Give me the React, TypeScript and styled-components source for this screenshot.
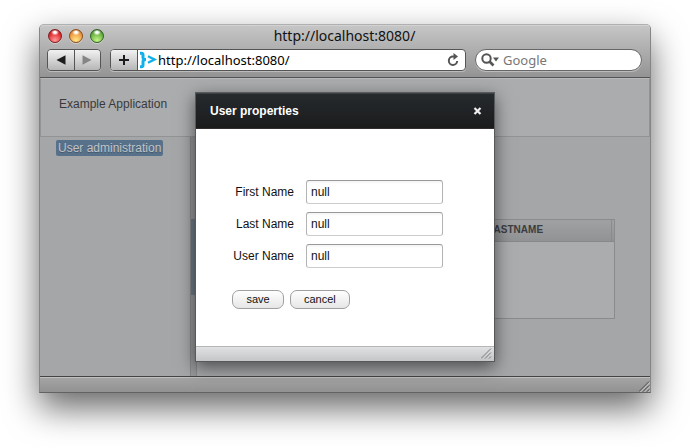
import React from 'react';
import styled, { createGlobalStyle } from 'styled-components';

const GlobalStyle = createGlobalStyle`
  *, *::before, *::after { box-sizing: border-box; }
  body {
    margin: 0;
    background: #fff;
    color: #222;
    font: 12px/16px "Liberation Sans", Arial, sans-serif;
    overflow: hidden;
  }
  input, button { font: inherit; margin: 0; }
`;

const lucida = '"Noto Sans", "Open Sans", sans-serif';

const Page = styled.div`
  display: flex;
  min-height: 100vh;
  padding: 24px 39px 54px;
`;

const BrowserWindow = styled.div`
  flex: 1;
  display: flex;
  flex-direction: column;
  border: 1px solid #858585;
  border-top-color: #b0b0b0;
  border-bottom-color: #636363;
  border-radius: 5px 5px 0 0;
  background: #a5a6a8;
  box-shadow: 0 15px 34px rgba(0, 0, 0, 0.6);
`;

const Chrome = styled.header`
  display: flex;
  flex-direction: column;
  gap: 3px;
  height: 53px;
  padding: 0 8px 0 7px;
  border-bottom: 1px solid #555;
  border-radius: 4px 4px 0 0;
  background: linear-gradient(#c6c6c6, #949494);
  box-shadow: inset 0 1px #d2d2d2;
  font-family: ${lucida};
`;

const TitleBar = styled.div`
  display: grid;
  grid-template-columns: 1fr auto 1fr;
  align-items: center;
  height: 21px;
`;

const Lights = styled.div`
  display: flex;
  gap: 7px;
  padding-left: 1px;
`;

const Light = styled.button<{ $edge: string; $mid: string; $glow: string }>`
  width: 14px;
  height: 14px;
  padding: 0;
  border: 1px solid ${(p) => p.$edge};
  border-radius: 50%;
  background:
    radial-gradient(ellipse 4px 3px at 50% 20%, #fff 30%, transparent),
    radial-gradient(circle at 50% 85%, ${(p) => p.$glow}, ${(p) => p.$mid} 65%, ${(p) => p.$edge});
  box-shadow: 0 1px rgba(255, 255, 255, 0.35);
`;

const WindowTitle = styled.h1`
  margin: 0;
  color: #111;
  font-size: 14px;
  font-weight: 400;
  line-height: 20px;
`;

const Toolbar = styled.div`
  display: flex;
  gap: 9px;
  height: 22px;
`;

const ButtonPair = styled.div`
  display: flex;
  width: 54px;
  border: 1px solid #555;
  border-radius: 4px;
  overflow: hidden;
  box-shadow: 0 1px rgba(255, 255, 255, 0.35);
`;

const ToolButton = styled.button`
  display: flex;
  flex: 1;
  align-items: center;
  justify-content: center;
  padding: 0;
  border: 0;
  background: linear-gradient(#f2f2f2, #b6b6b6);
  & + & { border-left: 1px solid #555; }
`;

const AddressBar = styled.div`
  display: flex;
  flex: 1;
  align-items: stretch;
  border: 1px solid #555;
  border-radius: 4px;
  overflow: hidden;
  background: #fff;
  box-shadow: 0 1px rgba(255, 255, 255, 0.35);
`;

const AddButton = styled(ToolButton)`
  flex: 0 0 27px;
  border-right: 1px solid #555;
`;

const SiteIcon = styled.svg`
  flex: none;
  align-self: center;
  width: 20px;
  height: 18px;
`;

const BareInput = styled.input`
  flex: 1;
  min-width: 0;
  padding: 0;
  border: 0;
  outline: 0;
  background: transparent;
  color: #000;
  font-size: 13px;
  line-height: 18px;
  &::placeholder { color: #777; opacity: 1; }
`;

const ReloadButton = styled.button`
  display: flex;
  align-items: center;
  padding: 0 5px;
  border: 0;
  background: transparent;
`;

const SearchBox = styled.label`
  display: flex;
  align-items: center;
  gap: 4px;
  width: 167px;
  padding: 0 5px;
  border: 1px solid #666;
  border-radius: 11px;
  background: #fff;
  box-shadow: 0 1px rgba(255, 255, 255, 0.35);
`;

const Viewport = styled.div`
  position: relative;
  flex: 1;
  display: flex;
  flex-direction: column;
`;

const AppHeader = styled.div`
  height: 59px;
  padding: 17px 18px;
  border: 1px solid #929395;
  border-top-color: #b7b8ba;
  background: #abacae;
  color: #3a3a3b;
  line-height: 16px;
`;

const Columns = styled.div`
  flex: 1;
  display: flex;
`;

const Sidebar = styled.nav`
  width: 150px;
  padding: 3px 16px;
`;

const NavLink = styled.a`
  display: inline-block;
  padding: 0 2px;
  border-radius: 2px;
  background: #58718a;
  color: #c0c4c8;
  text-decoration: none;
  text-shadow: 0 1px #45586c;
  line-height: 16px;
  white-space: nowrap;
`;

const Splitter = styled.div`
  width: 7px;
  padding-top: 82px;
  border: solid #87888a;
  border-width: 0 1px;
  background: #96979a;
`;

const SplitterGrip = styled.div`
  height: 76px;
  background: #6f7b87;
`;

const Main = styled.main`
  flex: 1;
  padding: 82px 35px 0;
`;

const TableFrame = styled.div`
  min-height: 100px;
  border: 1px solid #8a8b8d;
  background: #abacae;
`;

const Table = styled.table`
  width: 100%;
  border-collapse: collapse;
  table-layout: fixed;
`;

const HeadCell = styled.th<{ $width?: number }>`
  width: ${(p) => (p.$width ? `${p.$width}px` : 'auto')};
  height: 21px;
  padding: 0 6px;
  border-right: 1px solid #8a8b8d;
  border-bottom: 1px solid #87888a;
  background: linear-gradient(#a0a1a3, #919294);
  color: #3c3d40;
  font-size: 10px;
  line-height: 14px;
  text-align: left;
  &:last-child { border-right: 0; padding: 0; }
`;

const StatusBar = styled.footer`
  display: flex;
  align-items: flex-end;
  justify-content: flex-end;
  height: 16px;
  border-top: 1px solid #444;
  background: linear-gradient(#a5a5a5, #929292);
  box-shadow: inset 0 1px #c0c0c0;
`;

const Overlay = styled.div`
  position: absolute;
  inset: 0;
  display: flex;
  align-items: flex-start;
  justify-content: center;
  padding-top: 14px;
`;

const Dialog = styled.section`
  display: flex;
  flex-direction: column;
  width: 300px;
  border: 1px solid #58595a;
  background: #fff;
  box-shadow: 0 5px 16px rgba(0, 0, 0, 0.55);
`;

const DialogHeader = styled.header`
  display: flex;
  align-items: center;
  justify-content: space-between;
  height: 36px;
  padding: 0 12px 0 14px;
  border-bottom: 1px solid #332c2d;
  background: linear-gradient(#262b2e, #1b1b1c);
  box-shadow: inset 0 1px #3d4143;
`;

const DialogTitle = styled.h2`
  margin: 0;
  color: #fff;
  font-size: 12px;
  line-height: 16px;
`;

const CloseButton = styled.button`
  display: flex;
  padding: 0;
  border: 0;
  background: transparent;
`;

const Form = styled.form`
  display: flex;
  flex-direction: column;
  gap: 8px;
  padding: 51px 51px 37px 36px;
`;

const Field = styled.div`
  display: grid;
  grid-template-columns: 62px 1fr;
  align-items: center;
  gap: 12px;
  color: #111;
  text-align: right;
  white-space: nowrap;
`;

const TextInput = styled.input`
  width: 100%;
  height: 24px;
  padding: 0 4px;
  border: 1px solid #b3b3b3;
  border-top-color: #999;
  border-bottom-color: #ccc;
  border-radius: 3px;
  background: linear-gradient(#f3f3f3, #fff 3px);
  color: #111;
  line-height: 16px;
`;

const Actions = styled.div`
  display: flex;
  gap: 6px;
  padding-top: 14px;
`;

const PushButton = styled.button`
  height: 19px;
  padding: 0 13px 1px;
  min-width: 52px;
  border: 1px solid #a0a0a0;
  border-radius: 7px;
  background: linear-gradient(#fff, #e6e6e6);
  color: #111;
  font-size: 11px;
  line-height: 16px;
`;

const DialogFooter = styled.footer`
  display: flex;
  align-items: flex-end;
  justify-content: flex-end;
  height: 15px;
  padding: 0 2px 2px 0;
  border-top: 1px solid #b5b6b7;
  background: linear-gradient(#e0e1e2, #c5c6c8);
`;

const fields = [
  { id: 'first', label: 'First Name' },
  { id: 'last', label: 'Last Name' },
  { id: 'user', label: 'User Name' },
];

function ResizeGrip({ light }: { light?: boolean }) {
  return (
    <svg width="11" height="11" viewBox="0 0 11 11" fill="none" aria-hidden="true">
      {light && <path d="M1 11.5 11.5 1M5 11.5 11.5 5M9 11.5 11.5 9" stroke="#d0d0d0" />}
      <path d="M0 10.5 10 .5M4 10.5 10 4.5M8 10.5 10 8.5" stroke={light ? '#4c4c4c' : '#77787a'} />
    </svg>
  );
}

export default function App() {
  return (
    <Page>
      <GlobalStyle />
      <BrowserWindow>
        <Chrome>
          <TitleBar>
            <Lights>
              <Light aria-label="Close window" $edge="#7d1d20" $mid="#e0262c" $glow="#ff9a98" />
              <Light aria-label="Minimize window" $edge="#8c4f1c" $mid="#f0953a" $glow="#ffe88a" />
              <Light aria-label="Zoom window" $edge="#2f6420" $mid="#62ad3c" $glow="#c6f58a" />
            </Lights>
            <WindowTitle>http://localhost:8080/</WindowTitle>
          </TitleBar>
          <Toolbar>
            <ButtonPair>
              <ToolButton aria-label="Back">
                <svg width="10" height="10" viewBox="0 0 10 10"><path d="M.5 5 9.500 .2v9.600z" fill="#1c1c1c" /></svg>
              </ToolButton>
              <ToolButton aria-label="Forward">
                <svg width="10" height="10" viewBox="0 0 10 10"><path d="M9.500 5 .5 .2v9.600z" fill="#858585" /></svg>
              </ToolButton>
            </ButtonPair>
            <AddressBar>
              <AddButton aria-label="Add bookmark">
                <svg width="12" height="12" viewBox="0 0 12 12"><path d="M6 1v10M1 6h10" stroke="#1c1c1c" strokeWidth="2" /></svg>
              </AddButton>
              <SiteIcon viewBox="0 0 20 18" fill="none" stroke="#12b0ea" aria-hidden="true">
                <path d="M2 2.200h1.300q1.700 0 1.700 1.800v2.500Q5 8.500 8 8.500Q5 8.500 5 10.500v3.500q0 1.800-1.700 1.800H2" strokeWidth="3" />
                <path d="m10 5.200 6.500 3.300L10 11.800" strokeWidth="2.400" />
              </SiteIcon>
              <BareInput aria-label="Address" defaultValue="http://localhost:8080/" />
              <ReloadButton aria-label="Reload">
                <svg width="14" height="14" viewBox="0 0 14 14" fill="none">
                  <path d="M8.500 3.500H7A4.200 4.200 0 1 0 11.200 8" stroke="#555" strokeWidth="2" />
                  <path d="M7.500 0v7L12 3.500z" fill="#555" />
                </svg>
              </ReloadButton>
            </AddressBar>
            <SearchBox>
              <svg width="18" height="14" viewBox="0 0 18 14" fill="none" aria-hidden="true">
                <circle cx="5.500" cy="5.500" r="4.200" stroke="#555" strokeWidth="2" />
                <path d="m8.500 8.500 4 4" stroke="#555" strokeWidth="2.600" />
                <path d="M12 4.500h6L15 8.500z" fill="#555" />
              </svg>
              <BareInput aria-label="Search" placeholder="Google" />
            </SearchBox>
          </Toolbar>
        </Chrome>
        <Viewport>
          <AppHeader>Example Application</AppHeader>
          <Columns>
            <Sidebar>
              <NavLink href="#users">User administration</NavLink>
            </Sidebar>
            <Splitter>
              <SplitterGrip />
            </Splitter>
            <Main>
              <TableFrame>
                <Table>
                  <thead>
                    <tr>
                      <HeadCell />
                      <HeadCell scope="col" $width={130}>LASTNAME</HeadCell>
                      <HeadCell $width={3} />
                    </tr>
                  </thead>
                </Table>
              </TableFrame>
            </Main>
          </Columns>
          <Overlay>
            <Dialog role="dialog" aria-labelledby="dialog-title">
              <DialogHeader>
                <DialogTitle id="dialog-title">User properties</DialogTitle>
                <CloseButton aria-label="Close">
                  <svg width="9" height="8" viewBox="0 0 9 8"><path d="m1.500 1 6 6M7.500 1l-6 6" stroke="#eee" strokeWidth="2.200" /></svg>
                </CloseButton>
              </DialogHeader>
              <Form onSubmit={(e) => e.preventDefault()}>
                {fields.map((f) => (
                  <Field key={f.id}>
                    <label htmlFor={f.id}>{f.label}</label>
                    <TextInput id={f.id} defaultValue="null" />
                  </Field>
                ))}
                <Actions>
                  <PushButton type="submit">save</PushButton>
                  <PushButton type="button">cancel</PushButton>
                </Actions>
              </Form>
              <DialogFooter>
                <ResizeGrip />
              </DialogFooter>
            </Dialog>
          </Overlay>
        </Viewport>
        <StatusBar>
          <ResizeGrip light />
        </StatusBar>
      </BrowserWindow>
    </Page>
  );
}
